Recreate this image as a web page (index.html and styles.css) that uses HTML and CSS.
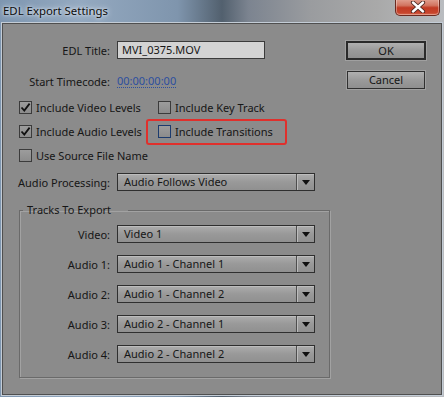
FILE: index.html
```html
<!DOCTYPE html>
<html>
<head>
  <title>EDL Export Settings</title>
  <link rel="stylesheet" href="styles.css">
</head>
<body>
  <div class="window">
    <div class="titlebar">
      <span class="title">EDL Export Settings</span>
      <button class="close">
        <svg width="16" height="12" viewBox="0 0 16 12">
          <path d="M3 1.5 L13 10.5 M13 1.5 L3 10.5" stroke="#4a2620" stroke-width="4.2" stroke-linecap="round"/>
          <path d="M3 1.5 L13 10.5 M13 1.5 L3 10.5" stroke="#ffffff" stroke-width="2.4" stroke-linecap="round"/>
        </svg>
      </button>
    </div>

    <div class="panel">
      <div class="form">
        <div class="row first">
          <span class="lbl">EDL Title:</span>
          <div class="text-input">MVI_0375.MOV</div>
        </div>
        <div class="row tc">
          <span class="lbl">Start Timecode:</span>
          <span class="timecode">00:00:00:00</span>
        </div>

        <div class="checks">
          <label class="check"><span class="box on"><svg width="11" height="11" viewBox="0 0 11 11"><path d="M1.5 5.5 L4.3 8.6 L9.6 1.6" fill="none" stroke="#111" stroke-width="1.8"/></svg></span>Include Video Levels</label>
          <label class="check"><span class="box"></span>Include Key Track</label>
          <label class="check"><span class="box on"><svg width="11" height="11" viewBox="0 0 11 11"><path d="M1.5 5.5 L4.3 8.6 L9.6 1.6" fill="none" stroke="#111" stroke-width="1.8"/></svg></span>Include Audio Levels</label>
          <label class="check marked"><span class="box focus"></span>Include Transitions</label>
          <label class="check"><span class="box"></span>Use Source File Name</label>
        </div>

        <div class="row ap">
          <span class="lbl">Audio Processing:</span>
          <div class="select"><span class="val">Audio Follows Video</span><span class="arrow"></span></div>
        </div>

        <fieldset class="group">
          <legend>Tracks To Export</legend>
          <div class="row track">
            <span class="lbl">Video:</span>
            <div class="select"><span class="val">Video 1</span><span class="arrow"></span></div>
          </div>
          <div class="row track">
            <span class="lbl">Audio 1:</span>
            <div class="select"><span class="val">Audio 1 - Channel 1</span><span class="arrow"></span></div>
          </div>
          <div class="row track">
            <span class="lbl">Audio 2:</span>
            <div class="select"><span class="val">Audio 1 - Channel 2</span><span class="arrow"></span></div>
          </div>
          <div class="row track">
            <span class="lbl">Audio 3:</span>
            <div class="select"><span class="val">Audio 2 - Channel 1</span><span class="arrow"></span></div>
          </div>
          <div class="row track">
            <span class="lbl">Audio 4:</span>
            <div class="select"><span class="val">Audio 2 - Channel 2</span><span class="arrow"></span></div>
          </div>
        </fieldset>
      </div>

      <div class="buttons">
        <button class="btn default">OK</button>
        <button class="btn">Cancel</button>
      </div>
    </div>
  </div>
</body>
</html>
```

FILE: styles.css
```css
* { box-sizing: border-box; }
body { margin: 0; font-family: "Noto Sans", "Open Sans", sans-serif; font-size: 11px; color: #161616; }

.window {
  width: 444px; height: 397px; overflow: hidden;
  background: linear-gradient(90deg, #7e96b0 0%, #94a9c0 18%, #7f95ad 40%, #52606e 50%, #7c8490 56%, #9a9c9f 70%, #a9a9a9 85%, #b9bcc0 100%);
}

.titlebar { height: 23px; display: flex; align-items: flex-start; position: relative; }
.title { margin: 3px 0 0 3px; font-size: 11.4px; color: #0c0c0c; text-shadow: 0 0 6px #e6edf5, 0 0 3px #e6edf5; line-height: 16px; }
.close {
  margin-left: auto; margin-right: 4px; margin-top: -1px;
  width: 45px; height: 17px; padding: 0; border: 1px solid #6b2a20; border-top: none;
  border-radius: 0 0 5px 5px;
  background: linear-gradient(#e2a393 0%, #d27561 40%, #c23b24 55%, #c7452d 85%, #d86b4f 100%);
  box-shadow: inset 0 0 0 1px rgba(255,255,255,0.35);
  display: flex; align-items: center; justify-content: center;
}

.panel {
  margin-left: 2px; width: 440px; height: 372px;
  border: 1px solid #4f4f4f; background: #8b8b8b;
  box-shadow: 0 0 0 1px #c3ccd6;
  display: flex;
}

.form { width: 330px; padding-top: 17px; }
.row { display: flex; align-items: center; height: 18px; }
.lbl { width: 107px; text-align: right; margin-right: 7px; white-space: nowrap; }

.text-input {
  width: 148px; height: 18px; padding: 0 4px; line-height: 16px;
  background: #d3d3d3; border: 1px solid #3a3a3a;
}

.row.tc { margin-top: 13px; }
.timecode { color: #2d4f9f; border-bottom: 1px dotted #2d4f9f; line-height: 13px; }

.checks {
  margin-top: 8px; padding-left: 16px;
  display: grid; grid-template-columns: 139px 150px; row-gap: 6px;
}
.check { display: flex; align-items: center; height: 18px; white-space: nowrap; position: relative; }
.box {
  width: 13px; height: 13px; margin-right: 4px; flex: none;
  border: 1px solid #3b3b3b;
  background: linear-gradient(#9c9c9c, #8c8c8c);
  display: flex; align-items: center; justify-content: center;
}
.box.focus { border-color: #1c3b6e; }
.check.marked::before {
  content: ""; position: absolute; left: -12px; top: -3px;
  width: 137px; height: 22px;
  border: 2px solid #e0302c; border-radius: 3px;
}

.row.ap { margin-top: 9px; }
.select {
  width: 198px; height: 18px; display: flex; align-items: stretch;
  border: 1px solid #2f2f2f;
  background: linear-gradient(#adadad, #999999 50%, #909090);
  box-shadow: inset 0 1px 0 #bdbdbd;
}
.select .val { flex: 1; padding-left: 6px; line-height: 16px; white-space: nowrap; }
.select .arrow {
  width: 18px; position: relative;
  border-left: 1px solid #4e4e4e;
  box-shadow: inset 1px 0 0 #bcbcbc;
}
.select .arrow::after {
  content: ""; position: absolute; left: 5px; top: 6px;
  border-left: 4px solid transparent; border-right: 4px solid transparent;
  border-top: 5px solid #111;
}

.group {
  margin: 11px 0 0 16px; width: 311px; padding: 7px 0 14px 0;
  border: 1px solid #6a6a6a;
  box-shadow: inset 1px 1px 0 #a2a2a2, 1px 1px 0 #a2a2a2;
}
.group legend { margin-left: 3px; padding: 0 17px 0 4px; line-height: 16px; }
.row.track + .row.track { margin-top: 12px; }
.row.track .lbl { width: 90px; }

.buttons {
  margin-left: auto; margin-right: 15px; padding-top: 17px;
  display: flex; flex-direction: column; align-items: center;
}
.btn {
  width: 78px; height: 18px; padding: 0;
  font-family: inherit; font-size: 11px; color: #161616; line-height: 14px;
  border: 1px solid #303030;
  background: linear-gradient(#b0b0b0, #9a9a9a 50%, #8f8f8f);
  box-shadow: 0 0 0 1px #a0a0a0;
}
.btn.default { width: 80px; height: 19px; border-width: 2px; border-color: #2a2a2a; }
.btn + .btn { margin-top: 11px; }
```
